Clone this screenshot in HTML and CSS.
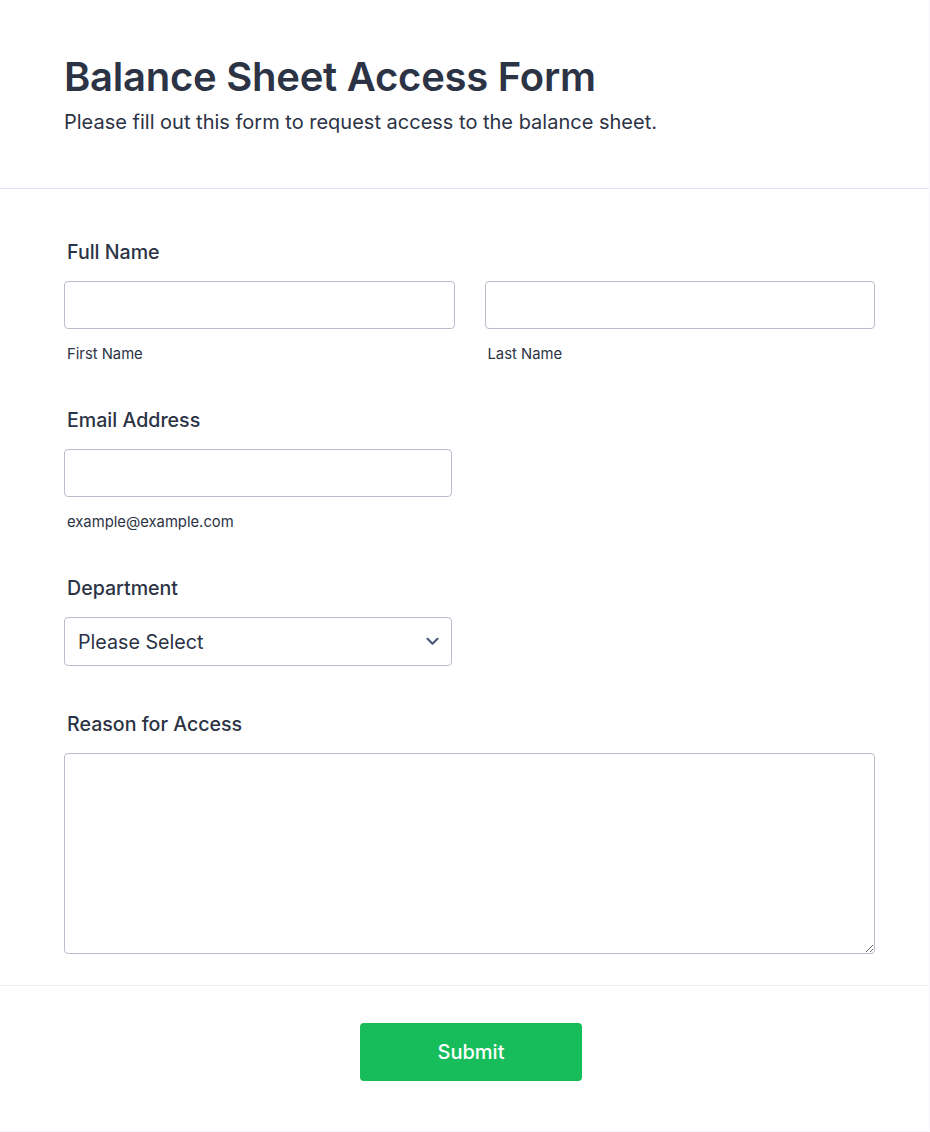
FILE: index.html
```html
<!DOCTYPE html>
<html lang="en">
<head>
<meta charset="utf-8">
<title>Balance Sheet Access Form</title>
<link rel="stylesheet" href="styles.css">
</head>
<body>
<div class="card">
  <header class="form-header">
    <h1 class="title">Balance Sheet Access Form</h1>
    <p class="subtitle">Please fill out this form to request access to the balance sheet.</p>
  </header>
  <form class="form-body">
    <div class="field field-sub">
      <label class="label">Full Name</label>
      <div class="name-row">
        <div class="sub-field">
          <input class="input" type="text">
          <span class="sublabel">First Name</span>
        </div>
        <div class="sub-field">
          <input class="input" type="text">
          <span class="sublabel">Last Name</span>
        </div>
      </div>
    </div>
    <div class="field field-sub">
      <label class="label">Email Address</label>
      <div class="sub-field half">
        <input class="input" type="email">
        <span class="sublabel">example@example.com</span>
      </div>
    </div>
    <div class="field">
      <label class="label">Department</label>
      <div class="select-wrap half">
        <select class="select">
          <option>Please Select</option>
        </select>
        <svg class="chevron" width="13" height="9" viewBox="0 0 13 9"><path d="M1.5 1.8 L6.5 6.8 L11.5 1.8" fill="none" stroke="#4a5a78" stroke-width="2.2" stroke-linecap="round" stroke-linejoin="round"/></svg>
      </div>
    </div>
    <div class="field field-last">
      <label class="label">Reason for Access</label>
      <textarea class="textarea"></textarea>
    </div>
  </form>
  <div class="form-footer">
    <button class="submit" type="button">Submit</button>
  </div>
</div>
</body>
</html>
```

FILE: styles.css
```css
* { box-sizing: border-box; }
html, body { margin: 0; padding: 0; background: #f6f6fb; }
body {
  font-family: Inter, "Noto Sans", "Liberation Sans", sans-serif;
  color: #2c3345;
}
.card {
  width: 929px;
  height: 1131px;
  background: #ffffff;
}
.form-header {
  padding: 53px 64px 0;
  height: 189px;
  border-bottom: 1px solid #e3e4f2;
}
.title {
  margin: 0;
  font-size: 40px;
  line-height: 48px;
  font-weight: 600;
  letter-spacing: -0.25px;
}
.subtitle {
  margin: 9px 0 0;
  font-size: 20px;
  line-height: 24px;
  font-weight: 400;
}
.form-body {
  padding: 51px 54px 31px 64px;
  border-bottom: 1px solid #ebebf2;
}
.field { margin-bottom: 46px; }
.field-sub { margin-bottom: 45px; }
.field-last { margin-bottom: 0; }
.label {
  display: block;
  padding-left: 3px;
  font-size: 19.6px;
  line-height: 24px;
  font-weight: 500;
  margin-bottom: 17px;
}
.name-row {
  display: flex;
  gap: 30px;
}
.name-row .sub-field { flex: 1; }
.sub-field { display: flex; flex-direction: column; }
.half { width: 388px; }
.input, .select, .textarea {
  display: block;
  width: 100%;
  height: 48px;
  border: 1px solid #b8bdc9;
  border-radius: 4px;
  background: #fff;
  font-family: inherit;
  outline: none;
}
.sublabel {
  margin-top: 16px;
  padding-left: 3px;
  font-size: 14.8px;
  line-height: 18px;
  color: #2c3345;
}
.select-wrap { position: relative; }
.select {
  height: 49px;
  appearance: none;
  -webkit-appearance: none;
  padding: 0 13px;
  font-size: 19.7px;
  color: #2c3345;
}
.chevron {
  position: absolute;
  right: 13px;
  top: 20px;
  pointer-events: none;
}
.textarea {
  height: 201px;
  resize: vertical;
}
.form-footer {
  display: flex;
  justify-content: center;
  padding-top: 37px;
}
.submit {
  width: 222px;
  height: 58px;
  border: none;
  border-radius: 4px;
  background: #18bd5b;
  color: #ffffff;
  font-family: inherit;
  font-size: 20px;
  font-weight: 500;
  margin-left: 13px;
}
```
